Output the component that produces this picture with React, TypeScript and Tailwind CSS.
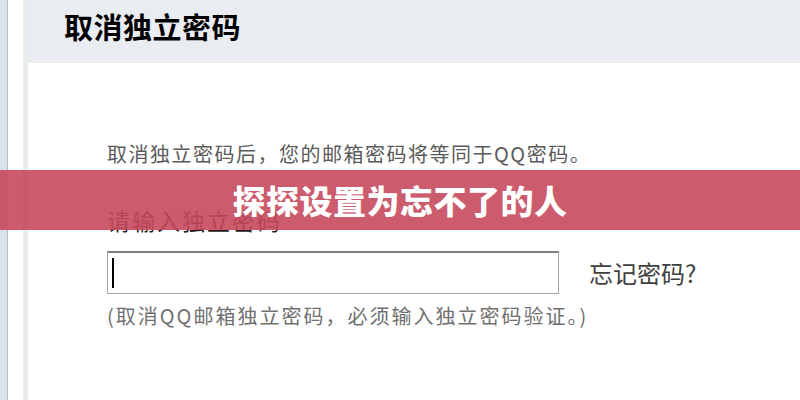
import React from "react";

const cjk = { fontFamily: '"Noto Sans CJK SC", "Noto Sans", sans-serif' };

export default function App() {
  return (
    <div className="relative w-[800px] h-[400px] overflow-hidden bg-white flex" style={cjk}>
      <div className="w-[7px] h-full bg-[#d9e1ea]" />
      <div className="w-[1px] h-full bg-[#b4bcc6]" />
      <div className="w-[15px] h-full bg-white" />
      <div className="w-[5px] h-full bg-[#e8eceb]" />
      <div className="flex-1 flex flex-col">
        <div className="h-[63px] bg-[#e9ecf0] border-b-2 border-[#eeeceb] pl-[36px] pt-[6px]">
          <div className="text-[29px] leading-[40px] font-bold text-black tracking-[0.5px]">取消独立密码</div>
        </div>
        <div className="flex-1 bg-white pl-[79px] pt-[78px]">
          <div className="text-[20px] leading-[26px] text-[#5a5a5a] tracking-[1.5px]">取消独立密码后，您的邮箱密码将等同于QQ密码。</div>
          <div className="mt-[38px] text-[23px] leading-[30px] text-[#2a1a1a] tracking-[2px]">请输入独立密码</div>
          <div className="mt-[16px] flex items-center">
            <div className="w-[452px] h-[43px] border border-[#a4a4a4] border-t-[#808080] border-t-2 bg-white flex items-center pl-[4px]">
              <div className="w-[2px] h-[30px] bg-black" />
            </div>
            <div className="ml-[30px] text-[24px] leading-[30px] text-[#404040]">忘记密码?</div>
          </div>
          <div className="mt-[9px] text-[20px] leading-[26px] text-[#707070] tracking-[2px]">(取消QQ邮箱独立密码，必须输入独立密码验证。)</div>
        </div>
      </div>
      <div className="absolute left-0 top-[170px] w-[800px] h-[60px] bg-[#c6495d]/90 flex items-center justify-center">
        <div className="text-[33px] leading-[40px] font-black text-white tracking-[0.5px]">探探设置为忘不了的人</div>
      </div>
    </div>
  );
}
